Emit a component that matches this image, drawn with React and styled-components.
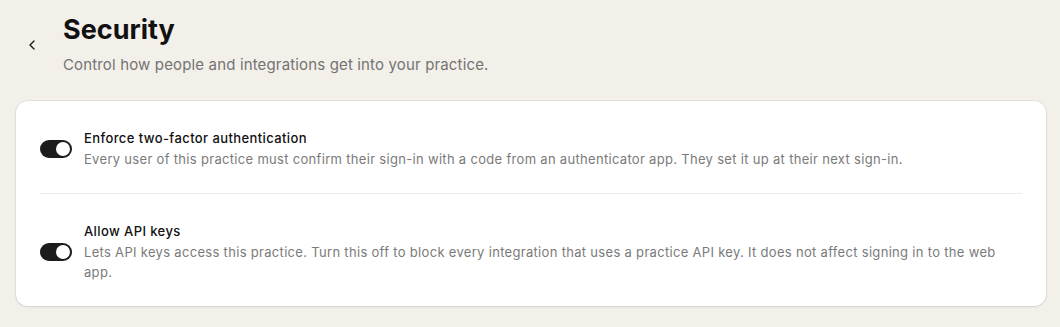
import React, { useState } from "react";
import styled, { createGlobalStyle } from "styled-components";
import { ChevronLeft } from "lucide-react";

const Global = createGlobalStyle`
  html, body { margin: 0; padding: 0; background: #f3f0ea; }
  body { font-family: Inter, "Noto Sans", sans-serif; -webkit-font-smoothing: antialiased; }
  * { box-sizing: border-box; }
`;

const Page = styled.div`
  padding: 14px 14px 20px 16px;
  display: flex;
  flex-direction: column;
  gap: 25px;
`;

const Header = styled.header`
  display: flex;
  align-items: center;
  gap: 15px;
`;

const BackButton = styled.button`
  width: 32px;
  height: 32px;
  display: flex;
  align-items: center;
  justify-content: center;
  border: none;
  background: transparent;
  color: #1a1a1a;
  padding: 0;
  cursor: pointer;
`;

const HeadText = styled.div`
  display: flex;
  flex-direction: column;
  gap: 8px;
`;

const Title = styled.h1`
  margin: 0;
  font-size: 27px;
  line-height: 32px;
  font-weight: 700;
  color: #111;
`;

const Subtitle = styled.p`
  margin: 0;
  font-size: 15px;
  line-height: 22px;
  color: #737373;
  letter-spacing: 0.15px;
`;

const Card = styled.section`
  background: #fff;
  border-radius: 12px;
  box-shadow: 0 0 0 1px rgba(0, 0, 0, 0.05), 0 1px 3px rgba(0, 0, 0, 0.08);
  padding: 3px 24px 0;
`;

const Row = styled.div`
  display: flex;
  align-items: center;
  gap: 12px;
  padding: ${(p) => (p.$last ? "27px 0 24px" : "24px 0")};
  border-top: ${(p) => (p.$divided ? "1px solid #ebebeb" : "none")};
`;

const Track = styled.button`
  flex: none;
  width: 32px;
  height: 18px;
  border-radius: 9px;
  border: none;
  padding: 0;
  background: ${(p) => (p.$on ? "#1c1c1c" : "#d4d4d4")};
  position: relative;
  cursor: pointer;
`;

const Knob = styled.span`
  position: absolute;
  top: 2px;
  left: ${(p) => (p.$on ? "16px" : "2px")};
  width: 14px;
  height: 14px;
  border-radius: 50%;
  background: #fff;
`;

const TextCol = styled.div`
  display: flex;
  flex-direction: column;
  gap: 1px;
`;

const RowTitle = styled.div`
  font-size: 13px;
  line-height: 20px;
  font-weight: 500;
  color: #111;
  letter-spacing: 0.4px;
`;

const RowDesc = styled.div`
  font-size: 13px;
  line-height: 20px;
  color: #7a7a7a;
  letter-spacing: 0.31px;
`;

function Toggle({ on, onChange }) {
  return (
    <Track $on={on} onClick={onChange} role="switch" aria-checked={on}>
      <Knob $on={on} />
    </Track>
  );
}

const settings = [
  {
    title: "Enforce two-factor authentication",
    desc: "Every user of this practice must confirm their sign-in with a code from an authenticator app. They set it up at their next sign-in.",
  },
  {
    title: "Allow API keys",
    desc: "Lets API keys access this practice. Turn this off to block every integration that uses a practice API key. It does not affect signing in to the web app.",
  },
];

export default function App() {
  const [state, setState] = useState([true, true]);
  return (
    <>
      <Global />
      <Page>
        <Header>
          <BackButton aria-label="Back">
            <ChevronLeft size={16} strokeWidth={2} />
          </BackButton>
          <HeadText>
            <Title>Security</Title>
            <Subtitle>Control how people and integrations get into your practice.</Subtitle>
          </HeadText>
        </Header>
        <Card>
          {settings.map((s, i) => (
            <Row key={s.title} $divided={i > 0} $last={i === settings.length - 1}>
              <Toggle
                on={state[i]}
                onChange={() => setState((st) => st.map((v, j) => (j === i ? !v : v)))}
              />
              <TextCol>
                <RowTitle>{s.title}</RowTitle>
                <RowDesc>{s.desc}</RowDesc>
              </TextCol>
            </Row>
          ))}
        </Card>
      </Page>
    </>
  );
}
